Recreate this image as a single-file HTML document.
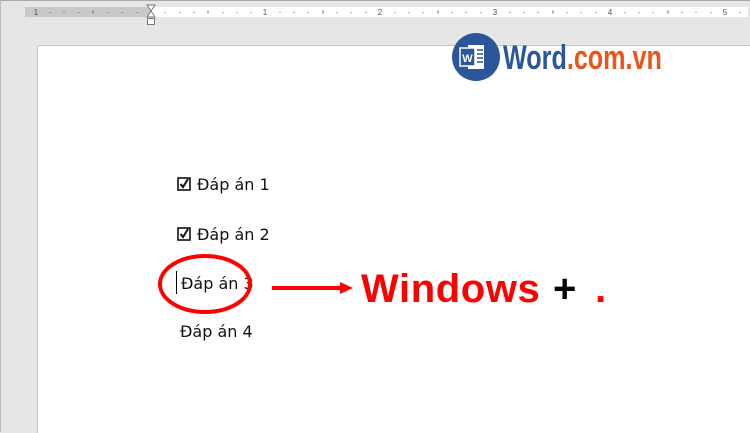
<!DOCTYPE html>
<html><head><meta charset="utf-8"><style>
body{margin:0;width:750px;height:432px;background:#e6e6e6;position:relative;overflow:hidden;font-family:"Liberation Sans",sans-serif}
.a{position:absolute}
.t{position:absolute;font-family:"DejaVu Sans","Liberation Sans",sans-serif;font-size:16px;color:#111}
.cb{position:relative;top:1px;margin-right:6px}
</style></head><body>
<div class="a" style="left:0;top:0;width:750px;height:1px;background:#aaa"></div>
<div class="a" style="left:0;top:0;width:1px;height:432px;background:#bbb"></div>
<div class="a" style="left:25px;top:7px;width:125px;height:10px;background:#c8c8c8"></div>
<div class="a" style="left:150px;top:7px;width:598px;height:10px;background:#fff"></div>
<svg class="a" style="left:0;top:0" width="750" height="30">
<g fill="#555" font-family="Liberation Sans" font-size="8" text-anchor="middle">
<text x="36" y="15">1</text><text x="265" y="15">1</text><text x="380" y="15">2</text><text x="495" y="15">3</text><text x="610" y="15">4</text><text x="725" y="15">5</text>
</g>
<g stroke="#666" stroke-width="1">
<path d="M50 12v1M64 12v1M79 12v1M93 10.5v3M108 12v1M122 12v1M137 12v1M165 12v1M180 12v1M194 12v1M208 10.5v3M223 12v1M237 12v1M251 12v1M280 12v1M294 12v1M308 12v1M323 10.5v3M337 12v1M351 12v1M366 12v1M395 12v1M409 12v1M423 12v1M438 10.5v3M452 12v1M466 12v1M481 12v1M510 12v1M524 12v1M538 12v1M553 10.5v3M567 12v1M581 12v1M596 12v1M625 12v1M639 12v1M653 12v1M668 10.5v3M682 12v1M696 12v1M711 12v1M740 12v1"/>
</g>
<path d="M147 5h8l-4 6zM147 17h8l-4-6z" fill="#fff" stroke="#777"/>
<rect x="147.5" y="18.5" width="7" height="6" fill="#fff" stroke="#777"/>
</svg>
<div class="a" style="left:37px;top:45px;width:713px;height:387px;background:#fff;border-left:1px solid #c6c6c6;border-top:1px solid #c6c6c6"></div>
<svg class="a" style="left:450px;top:31px" width="52" height="52"><circle cx="26" cy="26" r="24" fill="#2b579a"/><rect x="18" y="14" width="16" height="24" fill="#fff"/><rect x="10" y="17" width="15" height="18" fill="#2b579a" stroke="#fff" stroke-width="1.5"/><text x="17.5" y="31" fill="#fff" font-size="11" font-weight="bold" text-anchor="middle" font-family="Liberation Sans">W</text><path d="M27 19h6M27 23h6M27 27h6M27 31h6" stroke="#2b579a" stroke-width="1.5"/></svg>
<div class="a" style="left:503px;top:38px;font-size:34px;font-weight:bold;line-height:40px;transform:scaleX(0.74);transform-origin:0 0;white-space:nowrap"><span style="color:#2b579a">Word</span><span style="color:#e8561c">.com.vn</span></div>
<div class="t" style="left:177px;top:175px"><svg class="cb" width="14" height="14"><rect x="1" y="1" width="12" height="12" fill="none" stroke="#111" stroke-width="1.6"/><path d="M3.5 7l2.5 3 5-8" fill="none" stroke="#111" stroke-width="2"/></svg>Đáp án 1</div>
<div class="t" style="left:177px;top:225px"><svg class="cb" width="14" height="14"><rect x="1" y="1" width="12" height="12" fill="none" stroke="#111" stroke-width="1.6"/><path d="M3.5 7l2.5 3 5-8" fill="none" stroke="#111" stroke-width="2"/></svg>Đáp án 2</div>
<div class="a" style="left:176px;top:271px;width:1px;height:23px;background:#000"></div>
<div class="t" style="left:181px;top:274px">Đáp án 3</div>
<div class="t" style="left:180px;top:322px">Đáp án 4</div>
<svg class="a" style="left:0;top:0" width="750" height="432"><ellipse cx="205" cy="284" rx="45" ry="28" fill="none" stroke="#f00" stroke-width="4"/><path d="M272 288h70" stroke="#f00" stroke-width="4"/><path d="M340 282l13 6-13 6z" fill="#f00"/></svg>
<div class="a" style="left:361px;top:266px;font-size:40px;font-weight:bold;line-height:46px;color:#f00;letter-spacing:0.6px">Windows</div>
<div class="a" style="left:553px;top:266px;font-size:40px;font-weight:bold;line-height:46px;color:#000">+</div>
<div class="a" style="left:595px;top:266px;font-size:40px;font-weight:bold;line-height:46px;color:#f00">.</div>
</body></html>
